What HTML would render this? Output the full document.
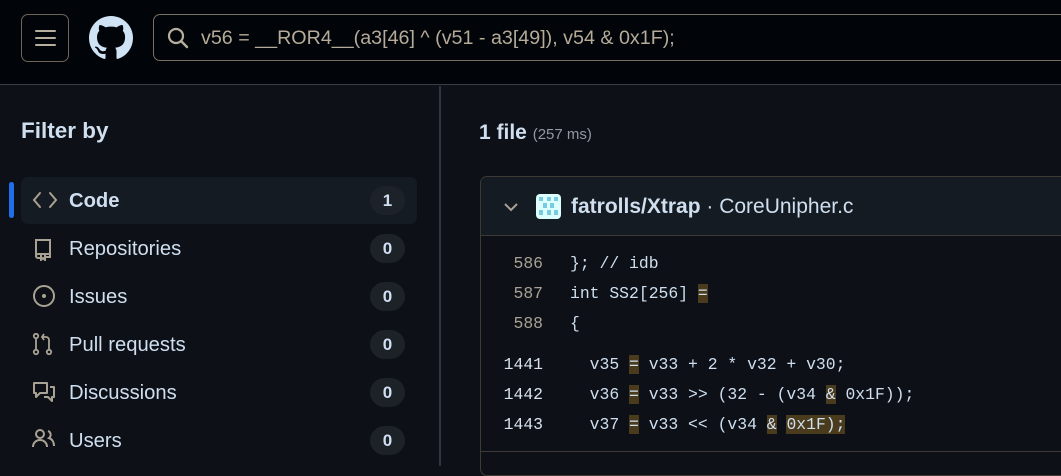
<!DOCTYPE html>
<html><head><style>
*{margin:0;padding:0;box-sizing:border-box}
body{width:1061px;height:466px;overflow:hidden;background:#0d1117;font-family:"Liberation Sans",sans-serif;color:#cfdff0;position:relative}
.top{position:absolute;left:0;top:0;width:1061px;height:85px;background:#010409;border-bottom:1px solid #3a3d42}
.ham{position:absolute;left:21px;top:14px;width:48px;height:48px;border:1px solid #6e6558;border-radius:7px}
.ham i{position:absolute;left:13px;width:21px;height:2px;background:#b8ae9e;border-radius:1px}
.search{position:absolute;left:153px;top:14px;width:930px;height:47px;border:1px solid #7a7060;border-radius:7px}
.search span{position:absolute;left:47px;top:12px;font-size:19.7px;color:#b6ab98;white-space:nowrap}
.side{position:absolute;left:0;top:86px;width:441px;height:380px;border-right:2px solid #30363d}
.fb{position:absolute;left:21px;top:118px;font-size:22.5px;font-weight:bold}
.item{position:absolute;left:21px;width:396px;height:47px;border-radius:7px}
.item .t{position:absolute;left:48px;top:13px;font-size:20.2px}
.item .c{position:absolute;left:349px;top:9px;width:35px;height:29px;border-radius:15px;background:#1d2229;text-align:center;font-size:17px;font-weight:bold;line-height:29px}
.item svg{position:absolute;left:11px;top:12px}
.sel{background:#151b23}
.bar{position:absolute;left:9px;top:182px;width:5px;height:36px;background:#1f6feb;border-radius:3px}
.res{position:absolute;left:479px;top:121px;font-size:21px;font-weight:bold}
.res small{font-size:15px;font-weight:normal;color:#9198a1}
.card{position:absolute;left:480px;top:176px;width:600px;height:300px;border:1px solid #3d3a35;border-radius:7px;overflow:hidden}
.hd{height:59px;background:#151b23;border-bottom:1px solid #3d3a35;position:relative}
.hd .n{position:absolute;left:90px;top:18px;font-size:21px;white-space:nowrap}
.code{font-family:"Liberation Mono",monospace;font-size:16.4px;position:absolute;left:0;white-space:pre}
.ln{position:absolute;width:62px;text-align:right;font-family:"Liberation Mono",monospace;font-size:16.4px;color:#a9a294}
.lb{color:#d8e2ec}
.h{background:#4a3b1c}
.sep{position:absolute;left:0;top:274px;width:600px;height:1px;background:#3d3a35}
</style></head><body>
<div class="top">
 <div class="ham"><i style="top:15px"></i><i style="top:22px"></i><i style="top:29px"></i></div>
 <svg style="position:absolute;left:89px;top:16px" width="44" height="44" viewBox="0 0 16 16"><path fill="#cfe3f5" d="M8 0C3.58 0 0 3.58 0 8c0 3.54 2.290 6.53 5.47 7.59.4.07.55-.17.55-.38 0-.19-.01-.82-.01-1.49-2.01.37-2.53-.49-2.69-.94-.09-.23-.48-.94-.82-1.130-.28-.15-.68-.52-.01-.53.63-.01 1.08.58 1.23.82.72 1.21 1.870.87 2.33.66.07-.52.28-.87.51-1.07-1.78-.2-3.64-.89-3.64-3.95 0-.87.31-1.59.82-2.15-.08-.2-.36-1.020.08-2.12 0 0 .67-.21 2.2.82.64-.18 1.32-.27 2-.27.68 0 1.36.09 2 .27 1.53-1.04 2.2-.82 2.2-.82.44 1.1.16 1.92.08 2.12.51.56.82 1.27.82 2.15 0 3.07-1.87 3.75-3.65 3.95.29.25.54.73.54 1.48 0 1.07-.01 1.93-.01 2.2 0 .21.15.46.55.38A8.013 8.013 0 0016 8c0-4.42-3.58-8-8-8z"/></svg>
 <div class="search">
  <svg style="position:absolute;left:13px;top:12px" width="22" height="22" viewBox="0 0 22 22"><circle cx="9" cy="9" r="7" fill="none" stroke="#b8ae9e" stroke-width="2.2"/><path d="M14 14l6 6" stroke="#b8ae9e" stroke-width="2.4" stroke-linecap="round"/></svg>
  <span>v56 = __ROR4__(a3[46] ^ (v51 - a3[49]), v54 &amp; 0x1F);</span>
 </div>
</div>
<div class="side"></div>
<div class="fb">Filter by</div>
<div class="bar"></div>
<div class="item sel" style="top:177px"><svg width="26" height="22" viewBox="0 0 26 22"><path d="M8 4L2 11l6 7M18 4l6 7-6 7" fill="none" stroke="#a9a294" stroke-width="2" stroke-linecap="round"/></svg><span class="t" style="font-weight:bold">Code</span><span class="c">1</span></div>
<div class="item" style="top:225px"><svg width="22" height="24" viewBox="0 0 22 24"><path d="M4 20V3h14v14H6a2 2 0 0 0-2 2 2 2 0 0 0 2 2h2M14 20h4v-3M9 17v6l2-2 2 2v-6" fill="none" stroke="#a9a294" stroke-width="2"/></svg><span class="t">Repositories</span><span class="c">0</span></div>
<div class="item" style="top:273px"><svg width="26" height="26" viewBox="0 0 26 26"><circle cx="12" cy="11" r="10" fill="none" stroke="#a9a294" stroke-width="2"/><circle cx="12" cy="11" r="2" fill="#a9a294"/></svg><span class="t">Issues</span><span class="c">0</span></div>
<div class="item" style="top:321px"><svg width="26" height="26" viewBox="0 0 26 26"><circle cx="4" cy="3" r="2.2" fill="none" stroke="#a9a294" stroke-width="1.8"/><circle cx="4" cy="19" r="2.2" fill="none" stroke="#a9a294" stroke-width="1.8"/><circle cx="17" cy="19" r="2.2" fill="none" stroke="#a9a294" stroke-width="1.8"/><path d="M4 5v12M17 17V7a3 3 0 0 0-3-3h-3M12 1l-2 3 2 3" fill="none" stroke="#a9a294" stroke-width="1.8"/></svg><span class="t">Pull requests</span><span class="c">0</span></div>
<div class="item" style="top:369px"><svg width="26" height="26" viewBox="0 0 26 26"><path d="M2 2h13v10H8l-4 4v-4H2zM18 6h4v10h-2v4l-4-4h-4" fill="none" stroke="#a9a294" stroke-width="2" stroke-linejoin="round"/></svg><span class="t">Discussions</span><span class="c">0</span></div>
<div class="item" style="top:417px"><svg width="26" height="26" viewBox="0 0 26 26"><circle cx="8" cy="5" r="4" fill="none" stroke="#a9a294" stroke-width="2"/><path d="M1 18c0-4 3-7 7-7s7 3 7 7M16 2a4 4 0 0 1 1 7c3 1 5 4 5 8" fill="none" stroke="#a9a294" stroke-width="2"/></svg><span class="t">Users</span><span class="c">0</span></div>
<div class="res">1 file <small>(257 ms)</small></div>
<div class="card">
 <div class="hd">
  <svg style="position:absolute;left:22px;top:22px" width="16" height="16" viewBox="0 0 16 16"><path d="M2 5l6 6 6-6" fill="none" stroke="#a9a294" stroke-width="2"/></svg>
  <svg style="position:absolute;left:55px;top:17px" width="25" height="25" viewBox="0 0 25 25"><rect width="25" height="25" rx="4" fill="#dff"/><rect x="3" y="3" width="4" height="4" fill="#7cd"/><rect x="11" y="3" width="4" height="4" fill="#7cd"/><rect x="18" y="3" width="4" height="4" fill="#7cd"/><rect x="7" y="9" width="4" height="5" fill="#7cd"/><rect x="14" y="9" width="4" height="5" fill="#7cd"/><rect x="3" y="16" width="4" height="5" fill="#7cd"/><rect x="11" y="16" width="4" height="5" fill="#7cd"/><rect x="18" y="16" width="4" height="5" fill="#7cd"/></svg>
  <span class="n"><b>fatrolls/Xtrap</b> · CoreUnipher.c</span>
 </div>
 <div class="ln" style="top:77px">586</div><div class="code" style="left:89px;top:77px">}; // idb</div>
 <div class="ln" style="top:107px">587</div><div class="code" style="left:89px;top:107px">int SS2[256] <span class="h">=</span></div>
 <div class="ln" style="top:137px">588</div><div class="code" style="left:89px;top:137px">{</div>
 <div class="ln lb" style="top:178px">1441</div><div class="code" style="left:89px;top:178px">  v35 <span class="h">=</span> v33 + 2 * v32 + v30;</div>
 <div class="ln lb" style="top:208px">1442</div><div class="code" style="left:89px;top:208px">  v36 <span class="h">=</span> v33 &gt;&gt; (32 - (v34 <span class="h">&amp;</span> 0x1F));</div>
 <div class="ln lb" style="top:238px">1443</div><div class="code" style="left:89px;top:238px">  v37 <span class="h">=</span> v33 &lt;&lt; (v34 <span class="h">&amp;</span> <span class="h">0x1F);</span></div>
 <div class="sep"></div>
</div>
</body></html>
